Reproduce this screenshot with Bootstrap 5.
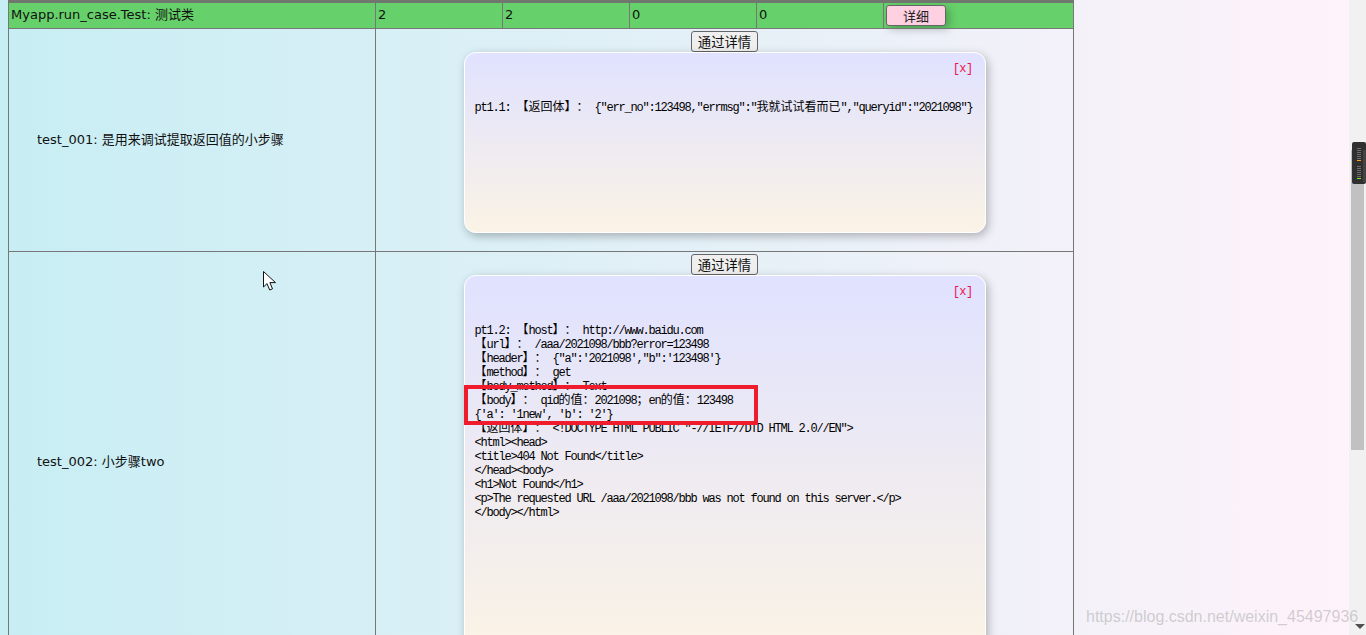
<!DOCTYPE html>
<html lang="zh">
<head>
<meta charset="utf-8">
<title>测试报告</title>
<link href="https://cdn.jsdelivr.net/npm/bootstrap@5.3.0/dist/css/bootstrap.min.css" rel="stylesheet">
<style>
html,body{height:635px;overflow:hidden;}
body{margin:0;font:13px/17px "DejaVu Sans","Noto Sans CJK SC",sans-serif;color:#111;background:#f1f1f1;}
.shell{height:635px;}
.page-pane{width:1349px;height:635px;overflow:hidden;padding:0 8px;background:linear-gradient(to right,#c7eef4,#fff2fa);flex:none;}
.report{width:1066px;table-layout:fixed;border-collapse:collapse;}
.report td{border:1px solid #777;padding:0 2px 2px;vertical-align:middle;}
.sum-row td{background:#66d06a;height:27px;border-top:3px solid #6f776f;}
.sum-row td.btn-cell{padding:0 2px;}
.step-name{padding-left:28px !important;}
.detail-cell{vertical-align:top !important;text-align:center;padding:2px 0 18px !important;}
.sys-btn{display:block;margin:0 auto;width:67px;height:21px;padding:0;font:13.33px/19px "Noto Sans CJK SC",sans-serif;color:#111;background:#efefef;border:1px solid #666;border-radius:3px;}
.pink-btn{display:block;margin:0;width:60px;height:21px;padding:0;font:13px/19px "Noto Sans CJK SC",sans-serif;color:#222;background:#ffcfe2;border:1px solid #666;border-radius:3px;box-shadow:3px 3px 8px rgba(0,0,0,.25);}
.log-box{width:522px;margin:0 auto;padding:9px 12px 0 10px;text-align:left;border:1px solid #fff;border-radius:12px;background:linear-gradient(#e0e2ff,#fbf3e5);box-shadow:2px 3px 10px rgba(0,0,0,.28);}
.box-a{height:181px;}
.box-b{height:380px;}
.close-x{font:12px/14px "Liberation Mono",monospace;letter-spacing:-.6px;color:#f0104e;padding-bottom:25px;text-align:right;}
.log-text{margin:0;font:12px/14px "Liberation Mono",monospace;letter-spacing:-1.2px;color:#000;white-space:pre;overflow:visible;}
.zh{font:12px/0 "Noto Sans CJK SC",sans-serif;letter-spacing:0;text-spacing-trim:space-all;font-feature-settings:"chws" 0,"palt" 0;}
.scroll-rail{width:17px;height:635px;flex:none;background:#f1f1f1;}
.scroll-thumb{width:13px;height:300px;margin:150px 0 0 2px;background:#c1c1c1;}
.arrow-down{position:absolute;left:1355px;top:624px;width:0;height:0;border:5px solid transparent;border-top:5px solid #505050;border-bottom:0;}
.meter{position:absolute;left:1352px;top:142px;}
.red-mark{position:absolute;left:464px;top:385px;width:294px;height:40px;border:4px solid #ee1c2c;}
.pointer{position:absolute;left:263px;top:271px;}
.stamp{position:absolute;left:1086px;top:607px;font:16px/20px "Liberation Sans",sans-serif;color:rgba(178,178,178,.6);white-space:nowrap;}
</style>
</head>
<body class="position-relative">
<div class="d-flex shell">
  <div class="page-pane">
    <table class="report">
      <colgroup><col style="width:367px"><col style="width:127px"><col style="width:127px"><col style="width:127px"><col style="width:127px"><col style="width:190px"></colgroup>
      <tr class="sum-row">
        <td>Myapp.run_case.Test: 测试类</td><td>2</td><td>2</td><td>0</td><td>0</td>
        <td class="btn-cell"><button type="button" class="pink-btn">详细</button></td>
      </tr>
      <tr>
        <td class="step-name">test_001: 是用来调试提取返回值的小步骤</td>
        <td colspan="5" class="detail-cell">
          <button type="button" class="sys-btn">通过详情</button>
          <div class="log-box box-a">
            <div class="close-x">[x]</div>
<pre class="log-text">pt1.1: <span class="zh">【返回体】：</span> {"err_no":123498,"errmsg":"<span class="zh">我就试试看而已</span>","queryid":"2021098"}</pre>
          </div>
        </td>
      </tr>
      <tr>
        <td class="step-name">test_002: 小步骤two</td>
        <td colspan="5" class="detail-cell">
          <button type="button" class="sys-btn">通过详情</button>
          <div class="log-box box-b">
            <div class="close-x">[x]</div>
<pre class="log-text">pt1.2: <span class="zh">【</span>host<span class="zh">】：</span> http://www.baidu.com
<span class="zh">【</span>url<span class="zh">】：</span> /aaa/2021098/bbb?error=123498
<span class="zh">【</span>header<span class="zh">】：</span> {"a":'2021098',"b":'123498'}
<span class="zh">【</span>method<span class="zh">】：</span> get
<span class="zh">【</span>body_method<span class="zh">】：</span> Text
<span class="zh">【</span>body<span class="zh">】：</span> qid<span class="zh">的值：</span>2021098<span class="zh">；</span>en<span class="zh">的值：</span>123498
{'a': '1new', 'b': '2'}
<span class="zh">【返回体】：</span> &lt;!DOCTYPE HTML PUBLIC "-//IETF//DTD HTML 2.0//EN"&gt;
&lt;html&gt;&lt;head&gt;
&lt;title&gt;404 Not Found&lt;/title&gt;
&lt;/head&gt;&lt;body&gt;
&lt;h1&gt;Not Found&lt;/h1&gt;
&lt;p&gt;The requested URL /aaa/2021098/bbb was not found on this server.&lt;/p&gt;
&lt;/body&gt;&lt;/html&gt;</pre>
          </div>
        </td>
      </tr>
    </table>
  </div>
  <div class="scroll-rail"><div class="scroll-thumb"></div></div>
</div>

<div class="red-mark"></div>
<svg class="pointer" width="14" height="20" viewBox="0 0 14 20"><path d="M.5.5V16L4 12.6 6.700 19l2.800-1.200L6.900 11.600H12.500Z" fill="#fff" stroke="#111" stroke-width="1"/></svg>
<svg class="meter" width="14" height="42" viewBox="0 0 14 42">
  <rect width="14" height="42" rx="2" fill="#303030"/>
  <rect x="11" y="8" width="3" height="32" fill="#444"/>
  <g fill="#6e6e6e"><rect x="5" y="6" width="4" height="1"/><rect x="5" y="8" width="4" height="1"/><rect x="5" y="10" width="4" height="1"/><rect x="5" y="12" width="4" height="1"/><rect x="5" y="14" width="4" height="1"/><rect x="5" y="16" width="4" height="1"/>
  <rect x="5" y="24" width="4" height="1"/><rect x="5" y="26" width="4" height="1"/><rect x="5" y="28" width="4" height="1"/><rect x="5" y="30" width="4" height="1"/><rect x="5" y="32" width="4" height="1"/><rect x="5" y="34" width="4" height="1"/></g>
  <rect x="5" y="18" width="4" height="1" fill="#ffa21a"/>
  <rect x="5" y="36" width="4" height="1" fill="#7cf01a"/>
</svg>
<div class="arrow-down"></div>
<div class="stamp">https://blog.csdn.net/weixin_45497936</div>
<script src="https://cdn.jsdelivr.net/npm/bootstrap@5.3.0/dist/js/bootstrap.bundle.min.js"></script>
</body>
</html>
